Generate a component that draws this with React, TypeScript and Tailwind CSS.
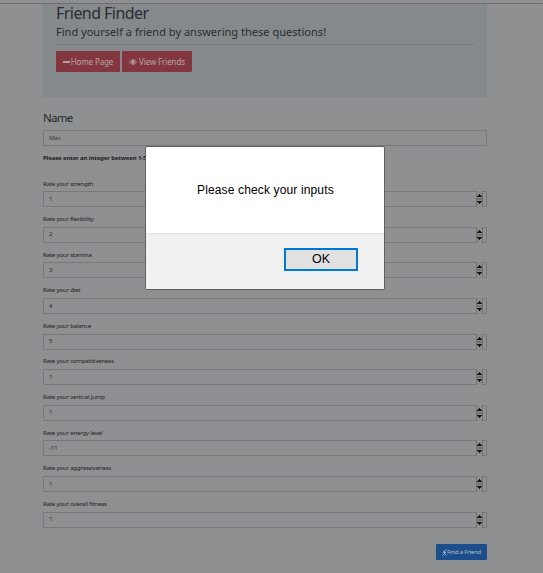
import React from "react";

const questions: [string, string][] = [
  ["Rate your strength", "1"],
  ["Rate your flexibility", "2"],
  ["Rate your stamina", "3"],
  ["Rate your diet", "4"],
  ["Rate your balance", "5"],
  ["Rate your competitiveness", "1"],
  ["Rate your vertical jump", "1"],
  ["Rate your energy level", "-11"],
  ["Rate your aggressiveness", "1"],
  ["Rate your overall fitness", "1"],
];

function Spinner() {
  return (
    <svg viewBox="0 0 7 16" className="mr-[3px] h-4 w-[7px] shrink-0" shapeRendering="crispEdges">
      <rect width="7" height="16" fill="#8b8c8c" />
      <path d="M0 0h1v16h-1zM6 0h1v16h-1zM1 7h5v2h-5z" fill="#707171" />
      <path d="M3 3h1v1h1v1h1v1h-5v-1h1v-1h1zM1 10h5v1h-1v1h-1v1h-1v-1h-1v-1h-1z" fill="#151515" />
    </svg>
  );
}

export default function App() {
  return (
    <div className="relative h-[573px] w-[543px] overflow-hidden bg-[#909192] bg-[radial-gradient(circle_at_25%_25%,#8389904d_0.7px,transparent_1px),radial-gradient(circle_at_75%_75%,#8389904d_0.7px,transparent_1px)] bg-[length:4px_4px] font-['Noto_Sans',sans-serif] text-[#1d2125]">
      <div className="h-[3px]" />
      <div className="h-px bg-[#6f7072]" />
      <main className="ml-[43px] w-[444px]">
        <header className="h-[93px] bg-[#84898c] bg-[radial-gradient(circle_at_25%_25%,#8b888840_0.7px,transparent_1px),radial-gradient(circle_at_75%_75%,#8b888840_0.7px,transparent_1px)] bg-[length:4px_4px] px-[13px]">
          <h1 className="h-[19px] whitespace-nowrap pt-px text-[16px] leading-[17px] tracking-[-0.55px] text-[#292d34]">Friend Finder</h1>
          <p className="h-[21px] whitespace-nowrap pt-px text-[11px] leading-[15px] tracking-[0.02px] text-[#292c31]">Find yourself a friend by answering these questions!</p>
          <hr className="border-[#787b7e]" />
          <div className="mt-[6px] flex gap-[2px] text-[8px] tracking-[-0.12px] text-[#b3a5a8]">
            <button className="flex h-[21px] w-16 items-center justify-center gap-px whitespace-nowrap rounded-[1px] bg-[#84363f]">
              <span className="h-[2px] w-[7px] bg-current" />Home Page
            </button>
            <button className="flex h-[21px] w-[70px] items-center justify-center gap-[2px] whitespace-nowrap rounded-[1px] bg-[#84363f]">
              <svg viewBox="0 0 16 12" className="h-[6px] w-2" fill="none" stroke="currentColor" strokeWidth="1.8"><path d="M1 6Q8-3 15 6Q8 15 1 6" /><circle cx="8" cy="6" r="2.4" fill="currentColor" /></svg>View Friends
            </button>
          </div>
        </header>
        <h2 className="h-[33px] pt-[13px] text-[11.5px] leading-[15px] tracking-[-0.75px] text-[#25292e]">Name</h2>
        <div className="flex h-4 items-center rounded-[1px] border border-[#77797d] px-[5px] text-[6px] tracking-[-0.1px] text-[#34373b]">Max</div>
        <p className="h-[33.5px] whitespace-nowrap pt-[5.5px] text-[6px] font-bold leading-[12px] tracking-[-0.13px]">Please enter an integer between 1-5</p>
        {questions.map(([label, value]) => (
          <div key={label} className="h-[35.6px] text-[6px]">
            <div className="h-[11.8px] whitespace-nowrap leading-[9px] tracking-[-0.15px]">{label}</div>
            <div className="flex h-4 items-center justify-between rounded-[1px] border border-[#77797d] pl-[5px] text-[#292c30]">
              <span>{value}</span><Spinner />
            </div>
          </div>
        ))}
        <button className="ml-auto mt-[9px] flex h-4 w-[51px] items-center justify-center whitespace-nowrap rounded-[1px] bg-[#1c4f89] text-[6px] tracking-[-0.18px] text-[#b5becb]">
          <svg viewBox="0 0 5 7" className="h-[7px] w-[5px]" fill="none" stroke="currentColor" strokeWidth=".9"><path d="M4 .5 2.5 2.5 4 4M2.5 2.5.5 3.5M2.5 2.5V4.5L.5 6.5M2.5 4.5 4 6.5" /></svg>
          Find a Friend
        </button>
      </main>
      <section className="absolute left-[145px] top-[146px] flex h-[144px] w-[240px] flex-col rounded-[2px] border border-[#606060] bg-white font-['Liberation_Sans',sans-serif] text-black">
        <p className="h-[86px] whitespace-nowrap pl-[51px] pt-[35px] text-[12px] leading-[16px] tracking-[0.14px]">Please check your inputs</p>
        <footer className="flex flex-1 justify-end border-t border-[#dfdfdf] bg-[#f0f0f0] pr-[26px] pt-[14px]">
          <button className="flex h-[23px] w-[74px] justify-center border-2 border-[#0078d7] bg-[#e1e1e1] text-[12.5px] leading-[19px]">OK</button>
        </footer>
      </section>
    </div>
  );
}
